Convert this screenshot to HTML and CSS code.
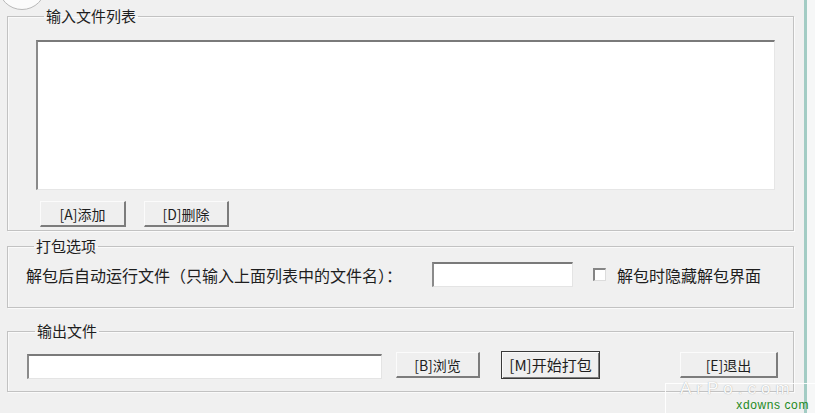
FILE: index.html
```html
<!DOCTYPE html>
<html lang="zh">
<head>
<meta charset="utf-8">
<title>打包工具</title>
<link rel="stylesheet" href="styles.css">
</head>
<body>
<div class="window">
  <div class="corner-dot"></div>
  <fieldset class="group group-list">
    <legend>输入文件列表</legend>
    <div class="listbox"></div>
    <div class="btn-row">
      <button class="btn btn-add">[A]添加</button>
      <button class="btn btn-del">[D]删除</button>
    </div>
  </fieldset>

  <fieldset class="group group-opts">
    <legend>打包选项</legend>
    <div class="opt-row">
      <span class="opt-label">解包后自动运行文件（只输入上面列表中的文件名）：</span>
      <span class="edit edit-run"></span>
      <span class="check"></span>
      <span class="check-label">解包时隐藏解包界面</span>
    </div>
  </fieldset>

  <fieldset class="group group-out">
    <legend>输出文件</legend>
    <div class="out-row">
      <span class="edit edit-out"></span>
      <button class="btn btn-browse">[B]浏览</button>
      <button class="btn btn-start">[M]开始打包</button>
      <button class="btn btn-exit">[E]退出</button>
    </div>
  </fieldset>

  <div class="watermark">
    <span class="wm-big">ArPo.com</span>
    <span class="wm-small">xdowns com</span>
  </div>
</div>
</body>
</html>
```

FILE: styles.css
```css
html, body {
  margin: 0;
  padding: 0;
}
body {
  background: #f6f7f7;
  font-family: "Noto Sans CJK SC", "Noto Sans", sans-serif;
  color: #1e1e1e;
  overflow: hidden;
}
.window {
  position: relative;
  width: 807px;
  height: 413px;
  box-sizing: border-box;
  padding: 7px 0 0 7px;
  background: #f0f0f0;
  border-right: 3px solid #a3ccc4;
}
.corner-dot {
  position: absolute;
  left: -2px;
  top: -38px;
  width: 46px;
  height: 46px;
  border-radius: 50%;
  background: #fbfbfb;
  border: 1px solid #b9b9b9;
}
.group {
  width: 787px;
  box-sizing: border-box;
  margin: 0;
  padding: 0;
  border: 1px solid #c2c2c2;
  box-shadow: inset 1px 1px 0 #fafafa, 1px 1px 0 #fafafa;
}
.group legend {
  margin-left: 8px;
  padding: 0 2px;
  font-size: 15px;
  line-height: 18px;
  height: 18px;
  color: #1e1e1e;
}
.group-list {
  padding: 15px 0 3px 28px;
}
.listbox {
  width: 739px;
  height: 150px;
  box-sizing: border-box;
  background: #fff;
  border-style: solid;
  border-width: 2px 1px 1px 2px;
  border-color: #7a7a7a #e6e6e6 #e6e6e6 #8a8a8a;
}
.btn-row {
  display: flex;
  gap: 18px;
  margin-top: 11px;
  margin-left: 4px;
}
.btn {
  height: 26px;
  box-sizing: border-box;
  padding: 0;
  font-family: "Noto Sans CJK SC", "Noto Sans", sans-serif;
  font-size: 14px;
  line-height: 22px;
  color: #1e1e1e;
  background: #efefef;
  border-style: solid;
  border-width: 1px 2px 2px 1px;
  border-color: #fbfbfb #7c7c7c #7c7c7c #fbfbfb;
}
.btn-add { width: 86px; }
.btn-del { width: 85px; }

.group-opts {
  margin-top: 6px;
  padding: 7px 0 20px 18px;
}
.opt-row {
  display: flex;
  align-items: center;
  height: 25px;
  font-size: 16px;
}
.opt-label {
  width: 384px;
  white-space: nowrap;
}
.edit {
  display: block;
  height: 25px;
  box-sizing: border-box;
  background: #fff;
  border-style: solid;
  border-width: 2px 1px 1px 2px;
  border-color: #7a7a7a #e4e4e4 #e4e4e4 #8a8a8a;
}
.edit-run {
  width: 141px;
  margin-left: 22px;
}
.check {
  display: block;
  width: 13px;
  height: 13px;
  box-sizing: border-box;
  margin-left: 20px;
  background: #fff;
  border-style: solid;
  border-width: 2px 1px 1px 2px;
  border-color: #858585 #dcdcdc #dcdcdc #858585;
}
.check-label {
  margin-left: 11px;
  white-space: nowrap;
}

.group-out {
  margin-top: 14px;
  padding: 11px 0 12px 19px;
}
.out-row {
  display: flex;
  align-items: center;
  height: 28px;
}
.edit-out {
  width: 355px;
  margin-top: 2px;
}
.btn-browse {
  width: 84px;
  margin-left: 14px;
}
.btn-start {
  width: 99px;
  height: 28px;
  margin-left: 21px;
  font-size: 15px;
  border: 1px solid #3a3a3a;
  box-shadow: inset 1px 1px 0 #fbfbfb, inset -1px -1px 0 #7c7c7c;
}
.btn-exit {
  width: 98px;
  margin-left: 80px;
}

.watermark {
  position: absolute;
  left: 665px;
  top: 383px;
  width: 150px;
  height: 30px;
  box-sizing: border-box;
  border: 1px solid rgba(255, 255, 255, 0.9);
  border-right: 0;
  border-bottom: 0;
  font-family: "Liberation Sans", sans-serif;
}
.wm-big {
  position: absolute;
  left: 14px;
  top: -3px;
  font-size: 17px;
  line-height: 16px;
  letter-spacing: 5px;
  color: #fbfbfb;
  text-shadow: 0 0 1px #9a9a9a;
  white-space: nowrap;
}
.wm-small {
  position: absolute;
  right: 6px;
  top: 14px;
  font-size: 12px;
  line-height: 14px;
  color: #1d8a1d;
  letter-spacing: 0.6px;
  white-space: nowrap;
}
```
